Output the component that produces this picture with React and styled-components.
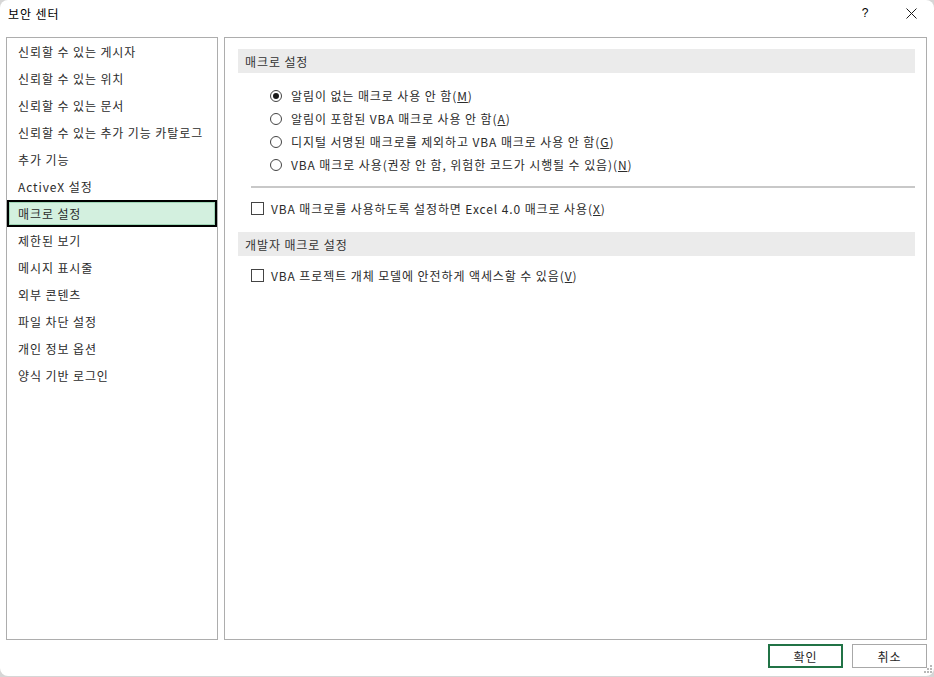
import React, { useState } from 'react';
import styled, { createGlobalStyle } from 'styled-components';

const GlobalStyle = createGlobalStyle`
    html, body {
        margin: 0;
        padding: 0;
        background: #d6d6d6;
    }
    body {
        font-family: "Noto Sans CJK KR", "Noto Sans", "Liberation Sans", sans-serif;
        font-size: 12px;
        letter-spacing: 0.9px;
        color: #2b2b2b;
    }
`;

const menuItems = [
    '신뢰할 수 있는 게시자',
    '신뢰할 수 있는 위치',
    '신뢰할 수 있는 문서',
    '신뢰할 수 있는 추가 기능 카탈로그',
    '추가 기능',
    'ActiveX 설정',
    '매크로 설정',
    '제한된 보기',
    '메시지 표시줄',
    '외부 콘텐츠',
    '파일 차단 설정',
    '개인 정보 옵션',
    '양식 기반 로그인',
];

const radioOptions = [
    { label: '알림이 없는 매크로 사용 안 함', key: 'M' },
    { label: '알림이 포함된 VBA 매크로 사용 안 함', key: 'A' },
    { label: '디지털 서명된 매크로를 제외하고 VBA 매크로 사용 안 함', key: 'G' },
    { label: 'VBA 매크로 사용(권장 안 함, 위험한 코드가 시행될 수 있음)', key: 'N' },
];

function Label({ text, hotkey }) {
    return (
        <span>
            {text}(<u>{hotkey}</u>)
        </span>
    );
}

export default function App() {
    const [selected, setSelected] = useState(6);
    const [macro, setMacro] = useState(0);
    const [excel4, setExcel4] = useState(false);
    const [vbaAccess, setVbaAccess] = useState(false);

    return (
        <>
            <GlobalStyle />
            <S.Window>
                <S.TitleBar>
                    <S.Title>보안 센터</S.Title>
                    <S.TitleButtons>
                        <S.HelpButton>?</S.HelpButton>
                        <S.CloseButton>
                            <svg width="11" height="11" viewBox="0 0 11 11">
                                <path d="M0.5 0.5 L10.5 10.5 M10.5 0.5 L0.5 10.5" stroke="#1a1a1a" strokeWidth="1" />
                            </svg>
                        </S.CloseButton>
                    </S.TitleButtons>
                </S.TitleBar>

                <S.Body>
                    <S.Sidebar>
                        {menuItems.map((item, i) => (
                            <S.MenuItem key={item} $active={i === selected} onClick={() => setSelected(i)}>
                                {item}
                            </S.MenuItem>
                        ))}
                    </S.Sidebar>

                    <S.Content>
                        <S.SectionHeader>매크로 설정</S.SectionHeader>
                        <S.RadioGroup>
                            {radioOptions.map((opt, i) => (
                                <S.OptionRow key={opt.key} onClick={() => setMacro(i)}>
                                    <S.Radio $checked={macro === i} />
                                    <Label text={opt.label} hotkey={opt.key} />
                                </S.OptionRow>
                            ))}
                        </S.RadioGroup>
                        <S.Separator />
                        <S.CheckRow onClick={() => setExcel4(!excel4)}>
                            <S.Checkbox $checked={excel4} />
                            <Label text="VBA 매크로를 사용하도록 설정하면 Excel 4.0 매크로 사용" hotkey="X" />
                        </S.CheckRow>
                        <S.SectionHeader $spaced>개발자 매크로 설정</S.SectionHeader>
                        <S.CheckRow $tight onClick={() => setVbaAccess(!vbaAccess)}>
                            <S.Checkbox $checked={vbaAccess} />
                            <Label text="VBA 프로젝트 개체 모델에 안전하게 액세스할 수 있음" hotkey="V" />
                        </S.CheckRow>
                    </S.Content>
                </S.Body>

                <S.Footer>
                    <S.Button $primary>확인</S.Button>
                    <S.Button>취소</S.Button>
                </S.Footer>

                <S.Grip>
                    <svg width="8" height="8" viewBox="0 0 8 8">
                        <rect x="6" y="0" width="2" height="2" fill="#b8b8b8" />
                        <rect x="3" y="3" width="2" height="2" fill="#b8b8b8" />
                        <rect x="6" y="3" width="2" height="2" fill="#b8b8b8" />
                        <rect x="0" y="6" width="2" height="2" fill="#b8b8b8" />
                        <rect x="3" y="6" width="2" height="2" fill="#b8b8b8" />
                        <rect x="6" y="6" width="2" height="2" fill="#b8b8b8" />
                    </svg>
                </S.Grip>
            </S.Window>
        </>
    );
}

const Window = styled.div`
    position: relative;
    box-sizing: border-box;
    width: 934px;
    height: 676px;
    background: #ffffff;
    border-radius: 8px;
    display: flex;
    flex-direction: column;
    overflow: hidden;
`;

const TitleBar = styled.div`
    height: 26px;
    display: flex;
    align-items: center;
    justify-content: space-between;
    padding-left: 8px;
`;

const Title = styled.div`
    font-size: 12px;
    color: #000;
`;

const TitleButtons = styled.div`
    display: flex;
    align-items: center;
    height: 100%;
`;

const HelpButton = styled.div`
    width: 46px;
    text-align: center;
    font-family: "Liberation Sans", sans-serif;
    font-size: 12px;
    letter-spacing: 0;
    color: #000;
`;

const CloseButton = styled.div`
    width: 46px;
    display: flex;
    justify-content: center;
    align-items: center;
`;

const Body = styled.div`
    display: flex;
    gap: 6px;
    padding: 11px 7px 0 6px;
`;

const Sidebar = styled.div`
    box-sizing: border-box;
    width: 212px;
    height: 603px;
    border: 1px solid #adadad;
    display: flex;
    flex-direction: column;
`;

const MenuItem = styled.div`
    box-sizing: border-box;
    height: 27px;
    display: flex;
    align-items: center;
    padding-left: ${(p) => (p.$active ? '9px' : '11px')};
    padding-bottom: 1px;
    white-space: nowrap;
    cursor: default;
    background: ${(p) => (p.$active ? '#d3f0df' : 'transparent')};
    border: ${(p) => (p.$active ? '2px solid #000' : 'none')};
    box-shadow: ${(p) => (p.$active ? 'inset 0 0 0 1px #9fd6b6' : 'none')};
`;

const Content = styled.div`
    box-sizing: border-box;
    flex: 1;
    height: 603px;
    border: 1px solid #adadad;
    padding: 11px 11px 0 13px;
    display: flex;
    flex-direction: column;
`;

const SectionHeader = styled.div`
    height: 24px;
    background: #ebebeb;
    display: flex;
    align-items: center;
    padding-left: 7px;
    color: #333;
    margin-top: ${(p) => (p.$spaced ? '12px' : '0')};
`;

const RadioGroup = styled.div`
    display: flex;
    flex-direction: column;
    margin-top: 11px;
    padding-left: 32px;
`;

const OptionRow = styled.div`
    height: 23px;
    display: flex;
    align-items: center;
    gap: 9px;
    white-space: nowrap;
    cursor: default;
`;

const Radio = styled.span`
    box-sizing: border-box;
    width: 12px;
    height: 12px;
    border-radius: 50%;
    border: 1px solid #444;
    display: flex;
    align-items: center;
    justify-content: center;
    &::after {
        content: '';
        width: 6px;
        height: 6px;
        border-radius: 50%;
        background: ${(p) => (p.$checked ? '#1a1a1a' : 'transparent')};
    }
`;

const Separator = styled.div`
    height: 2px;
    background: #c8c8c8;
    margin: 10px 0 0 13px;
`;

const CheckRow = styled.div`
    height: 23px;
    display: flex;
    align-items: center;
    gap: 7px;
    padding-left: 13px;
    margin-top: ${(p) => (p.$tight ? '8px' : '9px')};
    white-space: nowrap;
    cursor: default;
`;

const Checkbox = styled.span`
    box-sizing: border-box;
    width: 13px;
    height: 13px;
    border: 1px solid #444;
    background: #fff;
    display: flex;
    align-items: center;
    justify-content: center;
    font-size: 10px;
    &::after {
        content: '${(p) => (p.$checked ? '✓' : '')}';
    }
`;

const Footer = styled.div`
    display: flex;
    justify-content: flex-end;
    gap: 9px;
    padding: 4px 7px 0 0;
`;

const Button = styled.button`
    box-sizing: border-box;
    width: 75px;
    height: 24px;
    background: #fff;
    font-family: inherit;
    font-size: 12px;
    letter-spacing: 0.9px;
    color: #262626;
    border: ${(p) => (p.$primary ? '2px solid #217346' : '1px solid #a8a8a8')};
    padding: 0;
    cursor: default;
`;

const Grip = styled.div`
    position: absolute;
    right: 2px;
    bottom: 3px;
    line-height: 0;
`;

const S = {
    Window,
    TitleBar,
    Title,
    TitleButtons,
    HelpButton,
    CloseButton,
    Body,
    Sidebar,
    MenuItem,
    Content,
    SectionHeader,
    RadioGroup,
    OptionRow,
    Radio,
    Separator,
    CheckRow,
    Checkbox,
    Footer,
    Button,
    Grip,
};
